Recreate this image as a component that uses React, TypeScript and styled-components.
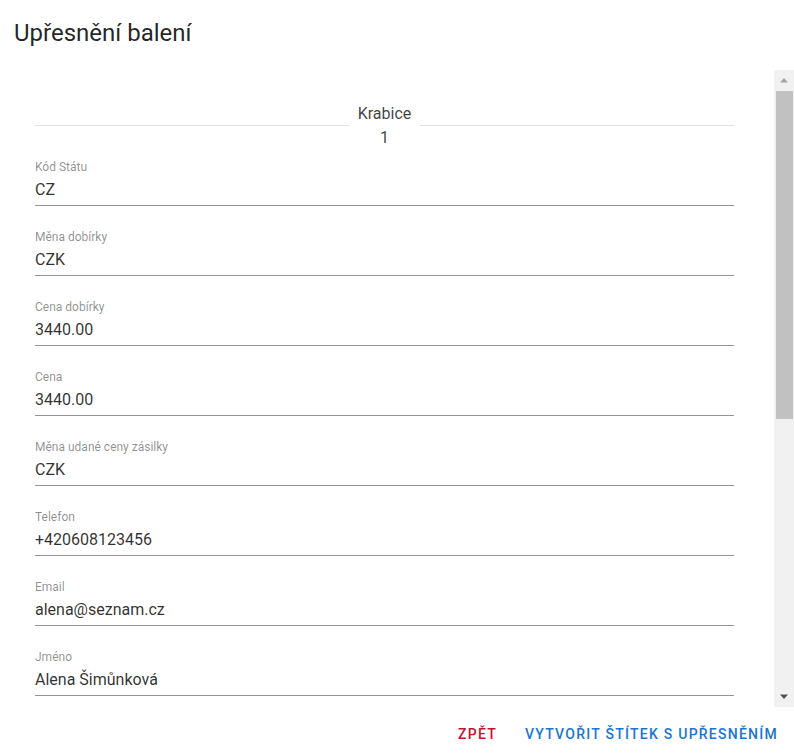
import styled, { createGlobalStyle } from 'styled-components';

const GlobalStyle = createGlobalStyle`
  html, body {
    margin: 0;
    padding: 0;
    background: #fff;
  }
  body {
    font-family: Roboto, 'Liberation Sans', sans-serif;
  }
`;

const Dialog = styled.div`
  display: flex;
  flex-direction: column;
  width: 794px;
  height: 753px;
  background: #fff;
  overflow: hidden;
`;

const Title = styled.h2`
  margin: 0;
  height: 70px;
  box-sizing: border-box;
  padding: 17px 14px 0;
  font-size: 24px;
  font-weight: 400;
  line-height: 32px;
  color: rgba(0, 0, 0, 0.87);
`;

const Body = styled.div`
  display: flex;
  height: 637px;
`;

const Content = styled.div`
  flex: 1;
  overflow: hidden;
  padding: 31px 40px 0 35px;
`;

// scrollbar drawn as its own column (headless browser hides native ones)
const ScrollTrack = styled.div`
  width: 20px;
  display: flex;
  flex-direction: column;
  background: #f1f1f1;
`;

const ScrollButton = styled.div`
  height: 20px;
  display: flex;
  align-items: center;
  justify-content: center;
`;

const ScrollThumb = styled.div`
  height: 328px;
  margin: 1px 1px 0 2px;
  background: #c1c1c1;
`;

const ScrollRest = styled.div`
  flex: 1;
`;

const BoxHeader = styled.div`
  display: flex;
  align-items: center;
  margin-bottom: 8px;
`;

const HeaderLine = styled.div`
  flex: 1;
  height: 1px;
  background: #e0e0e0;
`;

const HeaderText = styled.div`
  padding: 1px 9px 0;
  text-align: center;
  font-size: 16px;
  line-height: 24px;
  color: rgba(0, 0, 0, 0.75);
`;

const Field = styled.div`
  display: flex;
  flex-direction: column;
  margin-bottom: 22px;
  border-bottom: 1px solid rgba(0, 0, 0, 0.42);
  padding: 1px 0 3px;
`;

const Label = styled.div`
  font-size: 12px;
  line-height: 16px;
  color: rgba(0, 0, 0, 0.45);
  margin-bottom: 3px;
`;

const Value = styled.div`
  font-size: 16px;
  line-height: 24px;
  color: rgba(0, 0, 0, 0.82);
`;

const Actions = styled.div`
  flex: 1;
  display: flex;
  justify-content: flex-end;
  align-items: center;
  gap: 14px;
  padding: 8px 9px 0 0;
`;

const TextButton = styled.button<{ color: string }>`
  height: 36px;
  padding: 0 7px;
  border: none;
  background: transparent;
  font-family: Roboto, 'Liberation Sans', sans-serif;
  font-size: 14px;
  font-weight: 500;
  letter-spacing: 1.25px;
  text-transform: uppercase;
  color: ${(p) => p.color};
  cursor: pointer;
`;

const fields: [string, string][] = [
  ['Kód Státu', 'CZ'],
  ['Měna dobírky', 'CZK'],
  ['Cena dobírky', '3440.00'],
  ['Cena', '3440.00'],
  ['Měna udané ceny zásilky', 'CZK'],
  ['Telefon', '+420608123456'],
  ['Email', 'alena@seznam.cz'],
  ['Jméno', 'Alena Šimůnková'],
];

export default function App() {
  return (
    <Dialog>
      <GlobalStyle />
      <Title>Upřesnění balení</Title>
      <Body>
        <Content>
          <BoxHeader>
            <HeaderLine />
            <HeaderText>
              <div>Krabice</div>
              <div>1</div>
            </HeaderText>
            <HeaderLine />
          </BoxHeader>
          {fields.map(([label, value]) => (
            <Field key={label}>
              <Label>{label}</Label>
              <Value>{value}</Value>
            </Field>
          ))}
        </Content>
        <ScrollTrack>
          <ScrollButton>
            <svg width="10" height="6" viewBox="0 0 10 6">
              <path d="M1 5.5 L5 1 L9 5.5 Z" fill="#a3a3a3" />
            </svg>
          </ScrollButton>
          <ScrollThumb />
          <ScrollRest />
          <ScrollButton>
            <svg width="10" height="6" viewBox="0 0 10 6">
              <path d="M1 0.5 L5 5 L9 0.5 Z" fill="#505050" />
            </svg>
          </ScrollButton>
        </ScrollTrack>
      </Body>
      <Actions>
        <TextButton color="#c8102e">Zpět</TextButton>
        <TextButton color="#1976d2">Vytvořit štítek s upřesněním</TextButton>
      </Actions>
    </Dialog>
  );
}
